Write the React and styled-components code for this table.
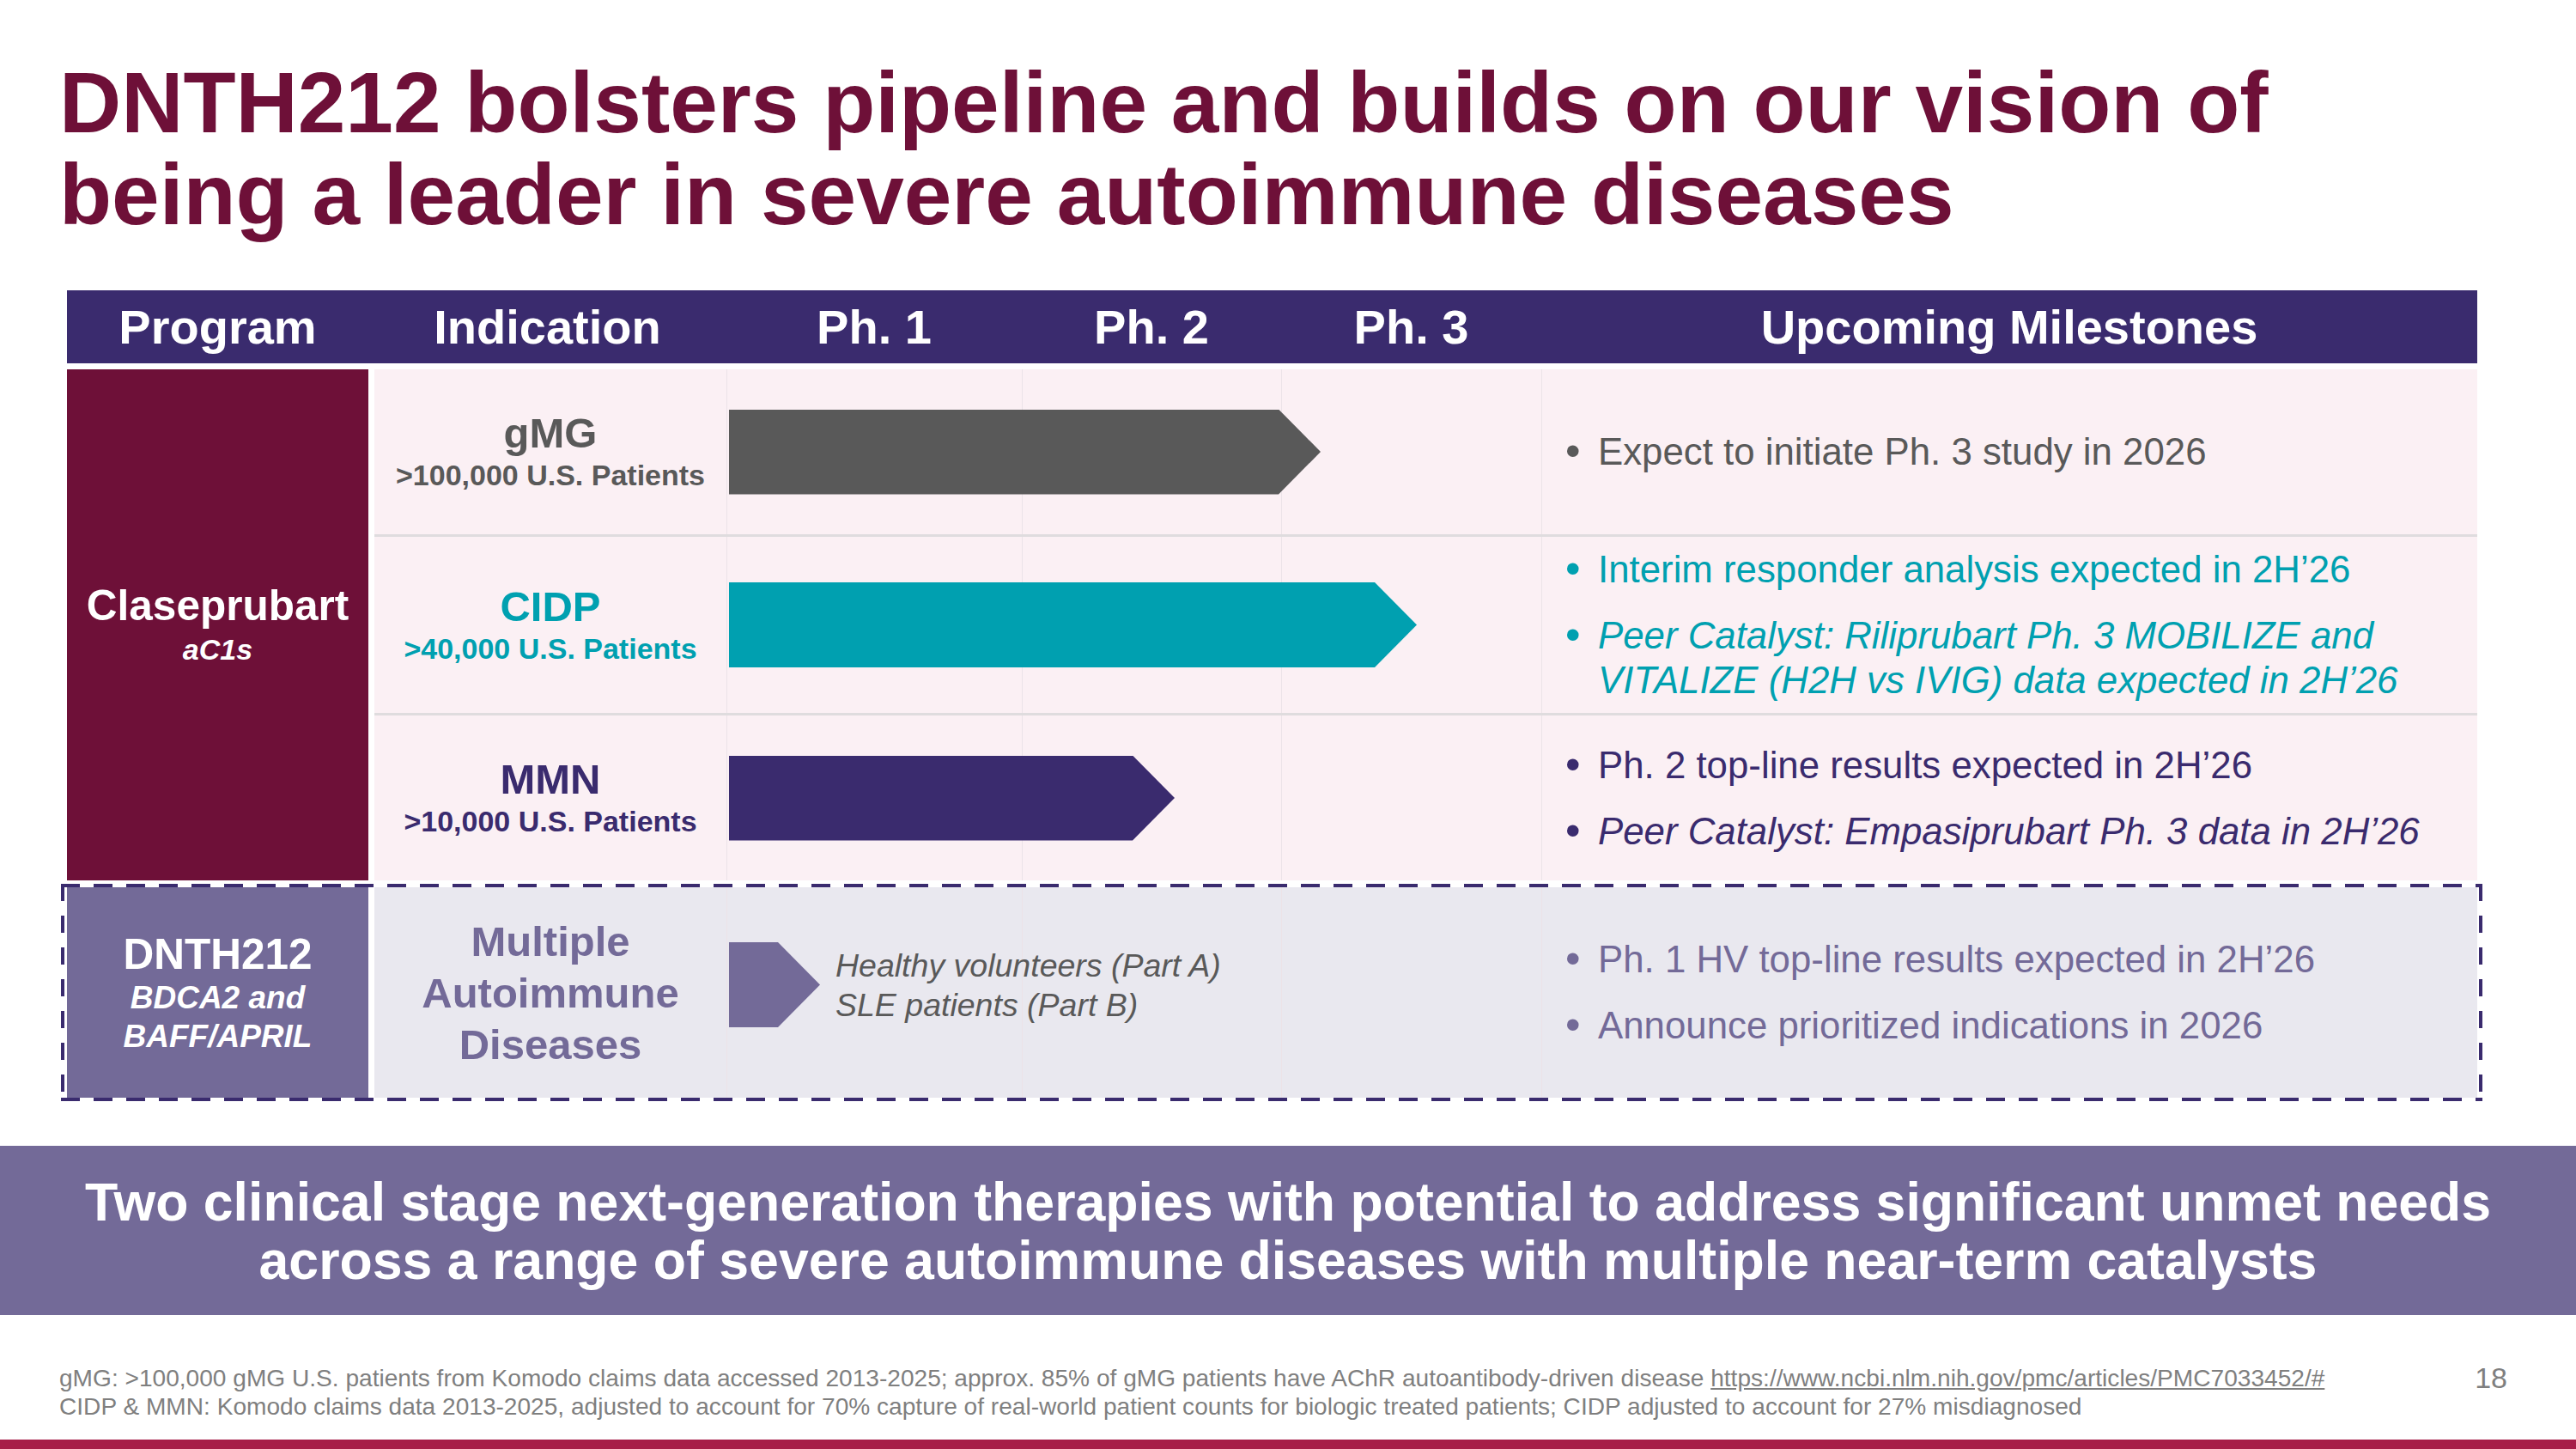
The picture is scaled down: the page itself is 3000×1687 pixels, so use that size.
import { createGlobalStyle, styled } from "styled-components";

const MAROON = "#6e1038";
const NAVY = "#3a2b6e";
const TEAL = "#00a0b0";
const GRAY = "#595959";
const LAVENDER = "#736a98";
const GRID = "#ece3e8";

const PHASE_COLS = "410px 344px 302px 303px 1fr";

const GlobalStyle = createGlobalStyle`
  html, body {
    margin: 0;
    padding: 0;
    background: #fff;
  }
  body {
    font-family: "Liberation Sans", Arial, sans-serif;
  }
`;

const rows = [
  {
    name: "gMG",
    patients: ">100,000 U.S. Patients",
    color: GRAY,
    height: 192,
    bar: 689,
    milestones: [{ text: "Expect to initiate Ph. 3 study in 2026" }],
  },
  {
    name: "CIDP",
    patients: ">40,000 U.S. Patients",
    color: TEAL,
    height: 205,
    bar: 801,
    milestones: [
      { text: "Interim responder analysis expected in 2H’26" },
      {
        text: "Peer Catalyst: Riliprubart Ph. 3 MOBILIZE and VITALIZE (H2H vs IVIG) data expected in 2H’26",
        italic: true,
      },
    ],
  },
  {
    name: "MMN",
    patients: ">10,000 U.S. Patients",
    color: NAVY,
    height: 192,
    bar: 519,
    milestones: [
      { text: "Ph. 2 top-line results expected in 2H’26" },
      { text: "Peer Catalyst: Empasiprubart Ph. 3 data in 2H’26", italic: true },
    ],
  },
];

const Milestones = ({ items, color }) => (
  <MilestoneCell>
    {items.map((m) => (
      <MilestoneItem key={m.text} $color={color} $italic={m.italic}>
        <Bullet>•</Bullet>
        <span>{m.text}</span>
      </MilestoneItem>
    ))}
  </MilestoneCell>
);

const PhaseGrid = () => (
  <>
    <PhaseCell $col={2} />
    <PhaseCell $col={3} />
    <PhaseCell $col={4} />
  </>
);

const App = () => (
  <>
    <GlobalStyle />
    <Slide>
      <Title>
        DNTH212 bolsters pipeline and builds on our vision of
        <br />
        being a leader in severe autoimmune diseases
      </Title>

      <Table>
        <HeaderRow>
          <HeaderCell>Program</HeaderCell>
          <HeaderCell>Indication</HeaderCell>
          <HeaderCell>Ph. 1</HeaderCell>
          <HeaderCell>Ph. 2</HeaderCell>
          <HeaderCell>Ph. 3</HeaderCell>
          <HeaderCell>Upcoming Milestones</HeaderCell>
        </HeaderRow>

        <Group>
          <ProgramCell $bg={MAROON}>
            <ProgramName>Claseprubart</ProgramName>
            <ProgramTarget $size={34} $lh={46}>
              aC1s
            </ProgramTarget>
          </ProgramCell>
          <RowStack>
            {rows.map((r, i) => (
              <div key={r.name}>
                {i > 0 && <Separator />}
                <Row $height={r.height} $bg="#fbf0f4">
                  <IndicationCell $color={r.color}>
                    <IndName>{r.name}</IndName>
                    <IndSub>{r.patients}</IndSub>
                  </IndicationCell>
                  <PhaseGrid />
                  <PhaseTrack>
                    <Bar $color={r.color} style={{ width: r.bar }} />
                  </PhaseTrack>
                  <Milestones items={r.milestones} color={r.color} />
                </Row>
              </div>
            ))}
          </RowStack>
        </Group>

        <DashedFrame>
          <Group>
            <ProgramCell $bg={LAVENDER}>
              <ProgramName>DNTH212</ProgramName>
              <ProgramTarget $size={37} $lh={45}>
                BDCA2 and
                <br />
                BAFF/APRIL
              </ProgramTarget>
            </ProgramCell>
            <RowStack>
              <Row $height={245} $bg="#e9e8ef">
                <IndicationCell $color={LAVENDER}>
                  <IndName $lh={60}>
                    Multiple
                    <br />
                    Autoimmune
                    <br />
                    Diseases
                  </IndName>
                </IndicationCell>
                <PhaseGrid />
                <PhaseTrack $lift={18}>
                  <Bar $color={LAVENDER} style={{ width: 106 }} />
                  <BarNote>
                    Healthy volunteers (Part A)
                    <br />
                    SLE patients (Part B)
                  </BarNote>
                </PhaseTrack>
                <Milestones
                  color={LAVENDER}
                  items={[
                    { text: "Ph. 1 HV top-line results expected in 2H’26" },
                    { text: "Announce prioritized indications in 2026" },
                  ]}
                />
              </Row>
            </RowStack>
          </Group>
        </DashedFrame>
      </Table>

      <Banner>
        Two clinical stage next-generation therapies with potential to address significant unmet needs
        <br />
        across a range of severe autoimmune diseases with multiple near-term catalysts
      </Banner>

      <Footer>
        <Footnotes>
          <div>
            gMG: &gt;100,000 gMG U.S. patients from Komodo claims data accessed 2013-2025; approx. 85% of gMG
            patients have AChR autoantibody-driven disease{" "}
            <FootLink>https://www.ncbi.nlm.nih.gov/pmc/articles/PMC7033452/#</FootLink>
          </div>
          <div>
            CIDP &amp; MMN: Komodo claims data 2013-2025, adjusted to account for 70% capture of real-world patient
            counts for biologic treated patients; CIDP adjusted to account for 27% misdiagnosed
          </div>
        </Footnotes>
        <PageNumber>18</PageNumber>
      </Footer>

      <Stripe />
    </Slide>
  </>
);

const Slide = styled.div`
  width: 3000px;
  height: 1687px;
  display: flex;
  flex-direction: column;
  overflow: hidden;
  background: #fff;
`;

const Title = styled.h1`
  margin: 66px 0 0 69px;
  font-size: 100px;
  line-height: 107px;
  font-weight: 700;
  color: ${MAROON};
  white-space: nowrap;
`;

const Table = styled.div`
  margin: 58px 0 0 78px;
  width: 2807px;
  display: flex;
  flex-direction: column;
`;

const HeaderRow = styled.div`
  display: grid;
  grid-template-columns: 351px 417px 344px 302px 303px 1fr;
  align-items: center;
  height: 85px;
  margin-bottom: 7px;
  background: ${NAVY};
`;

const HeaderCell = styled.div`
  text-align: center;
  color: #fff;
  font-size: 56px;
  font-weight: 700;
  white-space: nowrap;
`;

const Group = styled.div`
  display: flex;
`;

const ProgramCell = styled.div`
  width: 351px;
  flex-shrink: 0;
  margin-right: 7px;
  display: flex;
  flex-direction: column;
  align-items: center;
  justify-content: center;
  background: ${(p) => p.$bg};
  color: #fff;
  text-align: center;
`;

const ProgramName = styled.div`
  font-size: 49.5px;
  line-height: 56px;
  font-weight: 700;
`;

const ProgramTarget = styled.div`
  font-size: ${(p) => p.$size}px;
  line-height: ${(p) => p.$lh}px;
  font-weight: 700;
  font-style: italic;
`;

const RowStack = styled.div`
  flex: 1;
  display: flex;
  flex-direction: column;
`;

const Separator = styled.div`
  height: 3px;
  background: #dfdcde;
`;

const Row = styled.div`
  display: grid;
  grid-template-columns: ${PHASE_COLS};
  height: ${(p) => p.$height}px;
  background: ${(p) => p.$bg};
`;

const IndicationCell = styled.div`
  grid-column: 1;
  grid-row: 1;
  display: flex;
  flex-direction: column;
  align-items: center;
  justify-content: center;
  text-align: center;
  font-weight: 700;
  color: ${(p) => p.$color};
`;

const IndName = styled.div`
  font-size: 49px;
  line-height: ${(p) => p.$lh || 54}px;
`;

const IndSub = styled.div`
  font-size: 34px;
  line-height: 44px;
  white-space: nowrap;
`;

const PhaseCell = styled.div`
  grid-column: ${(p) => p.$col};
  grid-row: 1;
  border-left: 1px solid ${GRID};
`;

const PhaseTrack = styled.div`
  grid-column: 2 / 5;
  grid-row: 1;
  align-self: center;
  z-index: 1;
  display: flex;
  align-items: center;
  gap: 18px;
  padding-left: 3px;
  margin-bottom: ${(p) => p.$lift || 0}px;
`;

const Bar = styled.div`
  height: 99px;
  flex-shrink: 0;
  background: ${(p) => p.$color};
  clip-path: polygon(0 0, calc(100% - 49px) 0, 100% 50%, calc(100% - 49px) 100%, 0 100%);
`;

const BarNote = styled.div`
  font-size: 37.5px;
  line-height: 46px;
  font-style: italic;
  color: ${GRAY};
  white-space: nowrap;
`;

const MilestoneCell = styled.div`
  grid-column: 5;
  grid-row: 1;
  border-left: 1px solid ${GRID};
  display: flex;
  flex-direction: column;
  justify-content: center;
  gap: 25px;
  padding: 0 30px 0 27px;
`;

const MilestoneItem = styled.div`
  display: flex;
  font-size: 43.8px;
  line-height: 52px;
  color: ${(p) => p.$color};
  font-style: ${(p) => (p.$italic ? "italic" : "normal")};
`;

const Bullet = styled.span`
  width: 38px;
  flex-shrink: 0;
  font-style: normal;
  font-size: 50px;
  line-height: 50px;
`;

const DashedFrame = styled.div`
  margin: 4px -6px 0 -7px;
  padding: 4px 6px 4px 7px;
  background:
    repeating-linear-gradient(90deg, ${NAVY} 0 22px, transparent 22px 38px) top left / 100% 4px no-repeat,
    repeating-linear-gradient(90deg, ${NAVY} 0 22px, transparent 22px 38px) bottom left / 100% 4px no-repeat,
    repeating-linear-gradient(180deg, ${NAVY} 0 20px, transparent 20px 37px) top left / 4px 100% no-repeat,
    repeating-linear-gradient(180deg, ${NAVY} 0 20px, transparent 20px 37px) top right / 4px 100% no-repeat;
`;

const Banner = styled.div`
  margin-top: 52px;
  height: 197px;
  display: flex;
  align-items: center;
  justify-content: center;
  text-align: center;
  background: ${LAVENDER};
  color: #fff;
  font-size: 62.6px;
  line-height: 68px;
  font-weight: 700;
  white-space: nowrap;
`;

const Footer = styled.div`
  display: flex;
  align-items: flex-start;
  margin-top: 57px;
  padding-left: 69px;
  color: #7f7f7f;
`;

const Footnotes = styled.div`
  font-size: 28.1px;
  line-height: 33px;
  white-space: nowrap;
`;

const FootLink = styled.span`
  text-decoration: underline;
`;

const PageNumber = styled.div`
  margin-left: auto;
  margin-right: 80px;
  font-size: 34px;
  line-height: 33px;
`;

const Stripe = styled.div`
  margin-top: auto;
  height: 11px;
  background: #a71e48;
`;

export default App;
